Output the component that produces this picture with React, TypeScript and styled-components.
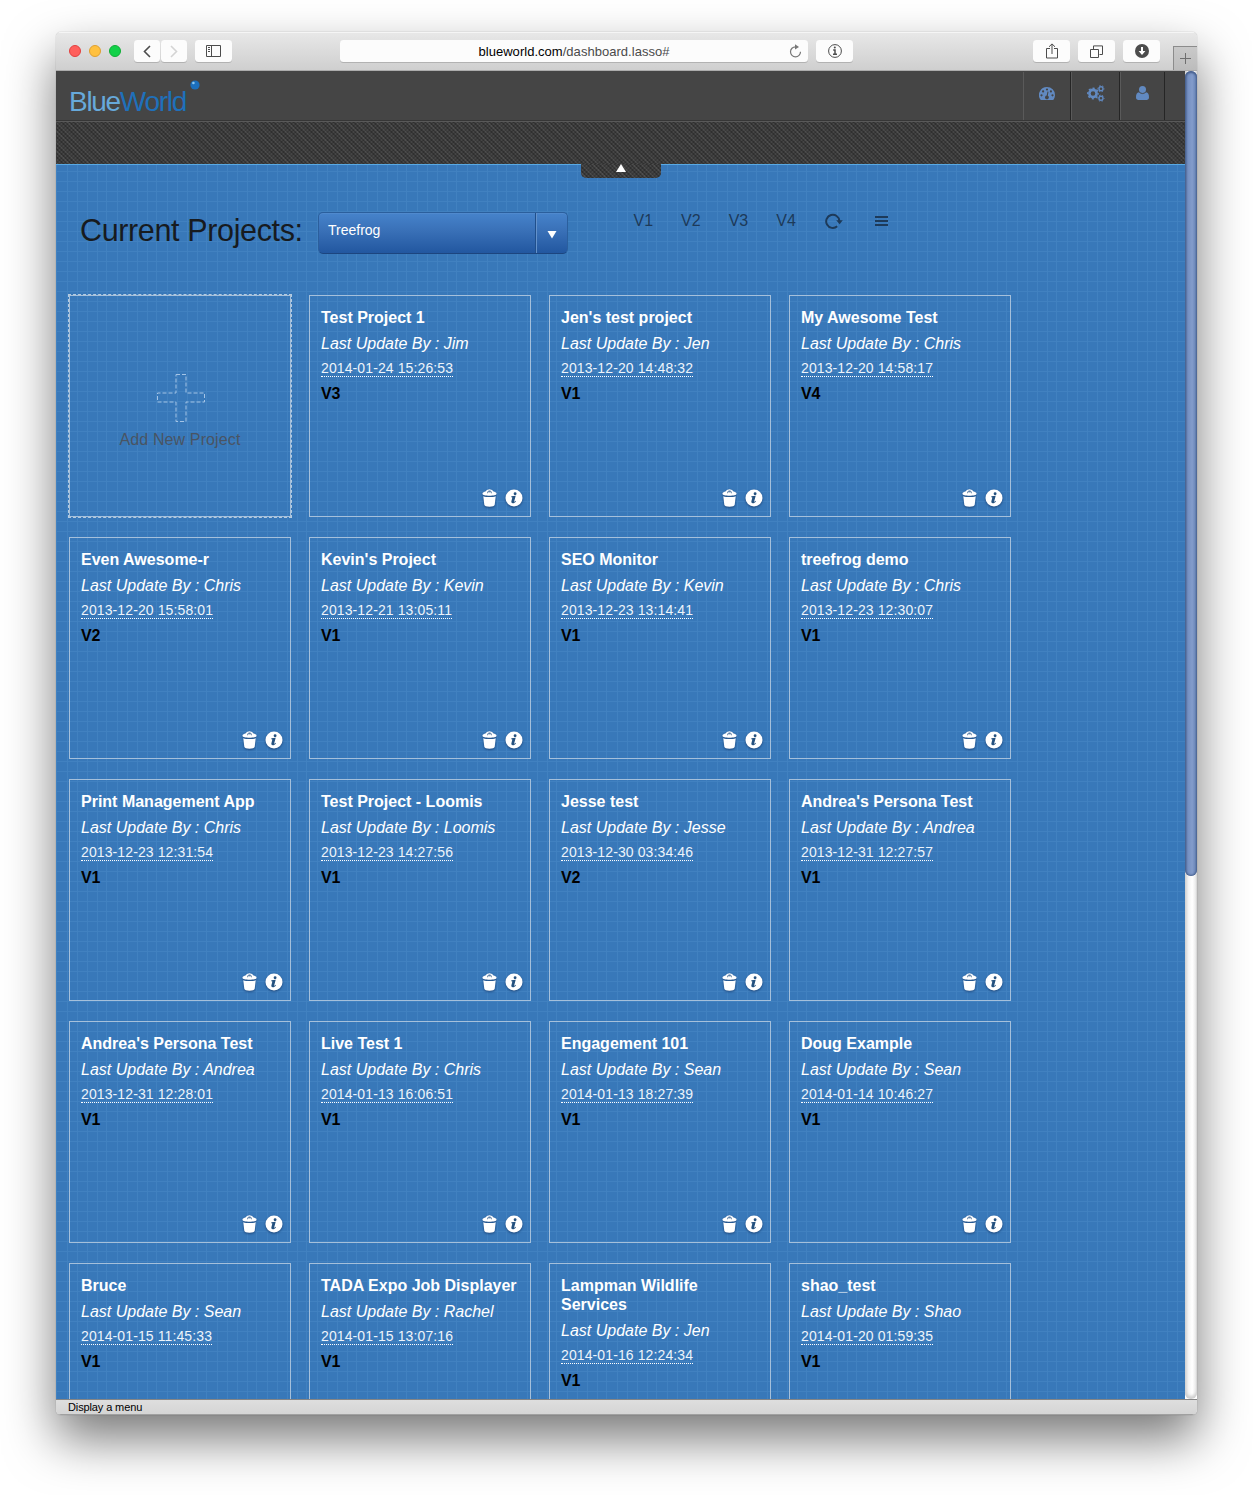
import React from 'react';
import styled, { createGlobalStyle } from 'styled-components';

const GlobalStyle = createGlobalStyle`
  * { box-sizing: border-box; }
  html, body { margin: 0; padding: 0; background: #fff; }
  body { font-family: "Liberation Sans", Arial, sans-serif; overflow: hidden; }
`;

const Desktop = styled.div`
  width: 1253px;
  height: 1495px;
  padding: 32px 56px 0;
  overflow: hidden;
  background: #fff;
`;

const Window = styled.div`
  width: 1141px;
  height: 1383px;
  display: flex;
  flex-direction: column;
  border-radius: 5px;
  overflow: hidden;
`;

const Shadow = styled.div`
  width: 1141px;
  border-radius: 5px;
  box-shadow: 0 0 1px rgba(0, 0, 0, 0.45), 0 24px 50px rgba(0, 0, 0, 0.53);
`;

const Chrome = styled.header`
  flex: none;
  height: 39px;
  display: flex;
  align-items: flex-start;
  padding: 8px 0 0 13px;
  background: linear-gradient(#e8e8e8, #cfcfcf);
  border-bottom: 1px solid #acacac;
  box-shadow: inset 0 1px 0 #f5f5f5;
`;

const Lights = styled.div`
  display: flex;
  gap: 8px;
  padding-top: 5px;
  width: 65px;
`;

const Light = styled.i<{ $fill: string; $edge: string }>`
  width: 12px;
  height: 12px;
  border-radius: 50%;
  background: ${p => p.$fill};
  border: 1px solid ${p => p.$edge};
`;

const ChromeButton = styled.div<{ $w: number; $ml?: number }>`
  width: ${p => p.$w}px;
  height: 22px;
  margin-left: ${p => p.$ml ?? 0}px;
  display: flex;
  align-items: center;
  justify-content: center;
  border-radius: 3.5px;
  background: #fcfcfc;
  box-shadow: 0 1px 0 rgba(0, 0, 0, 0.16);
`;

const AddressBar = styled(ChromeButton)`
  font-size: 13px;
  letter-spacing: 0.03px;
  color: #4a4a4a;
  b { font-weight: 400; color: #000; }
  span { flex: 1; text-align: center; padding-left: 19px; }
  svg { margin-right: 6px; }
`;

const NewTab = styled.div`
  width: 24px;
  height: 24px;
  margin: 6px 0 0 13px;
  border: 1px solid #8c8c8c;
  border-width: 1px 0 0 1px;
  background: linear-gradient(#c9c9c9, #bcbcbc);
  display: flex;
  align-items: center;
  justify-content: center;
`;

const Viewport = styled.div`
  flex: none;
  height: 1328px;
  display: flex;
`;

const Page = styled.main`
  width: 1129px;
  display: flex;
  flex-direction: column;
  overflow: hidden;
`;

const ScrollTrack = styled.div`
  width: 12px;
  border-radius: 0 0 6px 6px;
  background: linear-gradient(90deg, #d2d2d2, #f4f4f4 30%, #fff 60%, #ececec 90%, #d5d5d5);
  box-shadow: inset 0 -3px 3px #cfcfcf;
`;

const ScrollThumb = styled.div`
  height: 805px;
  border-radius: 6px;
  background: linear-gradient(90deg, #4b6391, #7590c2 25%, #839ccb 60%, #6d88ba 85%, #536b99);
  box-shadow: inset 0 2px 2px #465f8d, inset 0 -1px 2px #465f8d;
`;

const TopBar = styled.div`
  flex: none;
  height: 51px;
  display: flex;
  justify-content: space-between;
  background: #454545;
  border-bottom: 1px solid #595959;
  box-shadow: inset 0 -1px 0 #363636;
`;

const Logo = styled.div`
  display: flex;
  padding: 13px 0 0 13px;
  font-size: 28px;
  line-height: 36px;
  letter-spacing: -1.3px;
  color: #1f70ba;
  b { font-weight: 400; color: #67a9da; }
  svg { margin: -4px 0 0 4px; }
`;

const NavIcons = styled.nav`
  display: flex;
  height: 49px;
  padding: 1px 20px 0 0;
`;

const NavCell = styled.a<{ $w: number; $top: number }>`
  width: ${p => p.$w}px;
  height: 48px;
  display: flex;
  justify-content: center;
  align-items: flex-start;
  padding-top: ${p => p.$top}px;
  color: #6189c0;
  border-left: 1px solid #5a5a5a;
  border-right: 1px solid #252525;
`;

const texture = `
  background-color: #3b3b3b;
  background-image:
    linear-gradient(45deg, rgba(0,0,0,.2) 25%, transparent 25% 50%, rgba(0,0,0,.2) 50% 75%, transparent 75%),
    linear-gradient(-45deg, rgba(255,255,255,.05) 25%, transparent 25% 50%, rgba(255,255,255,.05) 50% 75%, transparent 75%),
    linear-gradient(45deg, rgba(255,255,255,.05) 15%, transparent 15% 50%, rgba(255,255,255,.05) 50% 65%, transparent 65%);
  background-size: 4px 4px, 4px 4px, 10px 10px;
`;

const TextureBar = styled.div`
  flex: none;
  position: relative;
  height: 42px;
  ${texture}
`;

const Handle = styled.div`
  position: absolute;
  left: 525px;
  top: 42px;
  width: 80px;
  height: 14px;
  border-radius: 0 0 5px 5px;
  display: flex;
  justify-content: center;
  ${texture}
`;

const Blueprint = styled.div`
  flex: none;
  height: 1235px;
  border-top: 1px solid #58a9e4;
  padding: 47px 13px 0;
  background-color: #3878b9;
  background-image:
    linear-gradient(90deg, #4181c0 0 1px, transparent 1px 11px, #4181c0 11px 12px, transparent 12px 21px, #4181c0 21px 22px, transparent 22px 31px, #4181c0 31px 32px, transparent 32px 41px, #4181c0 41px 42px, transparent 42px),
    linear-gradient(#4181c0 1px, transparent 1px);
  background-size: 50px 10px, 10px 10px;
  background-position: 0 0, 0 6px;
  overflow: hidden;
`;

const Heading = styled.div`
  display: flex;
  align-items: flex-start;
  height: 83px;
  padding-left: 11px;
`;

const Title = styled.h1`
  margin: -1px 0 0;
  width: 238px;
  font-size: 30.5px;
  line-height: 38px;
  font-weight: 400;
  letter-spacing: -0.36px;
  white-space: nowrap;
  color: #171b1f;
`;

const Select = styled.div`
  width: 250px;
  height: 42px;
  display: flex;
  border: 1px solid #2b5f9d;
  border-bottom-color: #1c457f;
  border-radius: 5px;
  background: linear-gradient(#4683cb, #3970b7 45%, #2257a0);
  color: #fff;
  font-size: 14px;
  box-shadow: inset 0 1px 0 rgba(255, 255, 255, 0.06);
`;

const SelectValue = styled.div`
  width: 217px;
  padding: 8px 9px;
  line-height: 19px;
  border-right: 1px solid #204f8b;
`;

const SelectArrow = styled.div`
  flex: 1;
  display: flex;
  justify-content: center;
  padding-top: 17px;
  border-left: 1px solid #6492cb;
`;

const Versions = styled.div`
  display: flex;
  margin-left: 51.5px;
  color: #1d3a59;
  font-size: 16px;
  line-height: 18px;
`;

const Version = styled.a`
  width: 47.6px;
  height: 18px;
  display: flex;
  justify-content: center;
  align-items: center;
`;

const Grid = styled.div`
  display: grid;
  grid-template-columns: repeat(4, 222px);
  grid-auto-rows: 222px;
  gap: 20px 18px;
`;

const Card = styled.article`
  border: 1px solid #a5c0db;
  padding: 12px 11px 9px;
  display: flex;
  flex-direction: column;
  align-items: flex-start;
  color: #fff;
`;

const CardTitle = styled.h2`
  margin: 0;
  width: 198px;
  font-size: 16px;
  line-height: 19px;
`;

const CardAuthor = styled.em`
  margin-top: 7px;
  font-size: 16px;
  line-height: 19px;
`;

const CardDate = styled.time`
  margin-top: 7px;
  font-size: 14px;
  line-height: 16px;
  height: 17px;
  letter-spacing: 0.11px;
  color: #edf4fb;
  border-bottom: 1px dotted #fff;
`;

const CardVersion = styled.strong`
  margin-top: 7px;
  font-size: 16px;
  line-height: 19px;
  letter-spacing: -0.3px;
  color: #000;
`;

const CardActions = styled.div`
  display: flex;
  gap: 8px;
  align-self: flex-end;
  margin: auto -4px 0 0;
  svg { filter: drop-shadow(0 1px 1px rgba(0, 20, 60, 0.5)); }
`;

const AddCard = styled.div`
  border: 1px solid #a5c0db;
  outline: 1px dashed #b4cbe0;
  display: flex;
  flex-direction: column;
  align-items: center;
  padding-top: 78px;
  color: #495463;
  font-size: 16px;
  line-height: 19px;
  letter-spacing: 0.12px;
  svg { margin: 0 0 8px 2px; }
`;

const StatusBar = styled.footer`
  flex: none;
  height: 16px;
  padding-left: 12px;
  border-top: 1px solid #858585;
  background: linear-gradient(#dedede, #d4d4d4);
  box-shadow: inset 0 -1px 0 #a0a0a0;
  font-size: 11px;
  line-height: 14px;
  letter-spacing: -0.12px;
  color: #000;
`;

type Project = [name: string, by: string, date: string, version: number];

const projects: Project[] = [
  ['Test Project 1', 'Jim', '2014-01-24 15:26:53', 3],
  ["Jen's test project", 'Jen', '2013-12-20 14:48:32', 1],
  ['My Awesome Test', 'Chris', '2013-12-20 14:58:17', 4],
  ['Even Awesome-r', 'Chris', '2013-12-20 15:58:01', 2],
  ["Kevin's Project", 'Kevin', '2013-12-21 13:05:11', 1],
  ['SEO Monitor', 'Kevin', '2013-12-23 13:14:41', 1],
  ['treefrog demo', 'Chris', '2013-12-23 12:30:07', 1],
  ['Print Management App', 'Chris', '2013-12-23 12:31:54', 1],
  ['Test Project - Loomis', 'Loomis', '2013-12-23 14:27:56', 1],
  ['Jesse test', 'Jesse', '2013-12-30 03:34:46', 2],
  ["Andrea's Persona Test", 'Andrea', '2013-12-31 12:27:57', 1],
  ["Andrea's Persona Test", 'Andrea', '2013-12-31 12:28:01', 1],
  ['Live Test 1', 'Chris', '2014-01-13 16:06:51', 1],
  ['Engagement 101', 'Sean', '2014-01-13 18:27:39', 1],
  ['Doug Example', 'Sean', '2014-01-14 10:46:27', 1],
  ['Bruce', 'Sean', '2014-01-15 11:45:33', 1],
  ['TADA Expo Job Displayer', 'Rachel', '2014-01-15 13:07:16', 1],
  ['Lampman Wildlife Services', 'Jen', '2014-01-16 12:24:34', 1],
  ['shao_test', 'Shao', '2014-01-20 01:59:35', 1],
];

const Chevron = ({ flip, color }: { flip?: boolean; color: string }) => (
  <svg width="8" height="13" viewBox="0 0 8 13" fill="none" stroke={color} strokeWidth="1.6">
    <path d={flip ? 'M1 1l5.5 5.5L1 12' : 'M7 1L1.5 6.5 7 12'} />
  </svg>
);

const SidebarIcon = () => (
  <svg width="15" height="12" viewBox="0 0 15 12" fill="none" stroke="#4c4c4c">
    <path d="M.5.5h14v11H.5zM5.5.5v11M2 2.5h2M2 4.5h2M2 6.5h2" />
  </svg>
);

const ReloadIcon = () => (
  <svg width="13" height="14" viewBox="0 0 13 14" fill="none" stroke="#777" strokeWidth="1.2">
    <path d="M7.2 2.8H6.5a5 5 0 1 0 5 5" />
    <path d="M6 .2L10 2.9 6 5.6z" fill="#777" stroke="none" />
  </svg>
);

const PageInfoIcon = () => (
  <svg width="14" height="14" viewBox="0 0 14 14" fill="none" stroke="#4c4c4c">
    <circle cx="7" cy="7" r="6.4" />
    <path d="M5.2 6H7v4.3M5 10.3h4" strokeWidth="1.5" />
    <circle cx="6.8" cy="3.6" r="1" fill="#4c4c4c" stroke="none" />
  </svg>
);

const ShareIcon = () => (
  <svg width="12" height="16" viewBox="0 0 12 16" fill="none" stroke="#4c4c4c">
    <path d="M4 5.5H.5v9.5h11V5.5H8M6 11V1M3 3.8L6 .9l3 2.9" />
  </svg>
);

const TabsIcon = () => (
  <svg width="13" height="13" viewBox="0 0 13 13" fill="none" stroke="#4c4c4c">
    <path d="M.5 4.5h8v8h-8zM3.5 4V.9h9v8.6H9.5" />
  </svg>
);

const DownloadIcon = () => (
  <svg width="14" height="14" viewBox="0 0 14 14">
    <circle cx="7" cy="7" r="7" fill="#4c4c4c" />
    <path d="M6 3h2v4h2.4L7 11 3.6 7H6z" fill="#fff" />
  </svg>
);

const GaugeIcon = () => (
  <svg width="16" height="13" viewBox="0 0 16 13">
    <path d="M8 0a8 8 0 0 1 8 8c0 1.6-.4 3-1.2 4.3-.2.4-.4.7-.9.7H2.1c-.5 0-.7-.3-.9-.7A8 8 0 0 1 8 0z" fill="currentColor" />
    <g fill="#454545">
      <circle cx="2.5" cy="8.3" r="1.1" />
      <circle cx="4.1" cy="4.4" r="1.1" />
      <circle cx="8" cy="2.5" r="1.1" />
      <circle cx="11.9" cy="4.4" r="1.1" />
      <circle cx="13.5" cy="8.3" r="1.1" />
      <path d="M8.500 4.600l1 .2-.7 3.900a1.900 1.900 0 1 1-1.100-.2z" />
    </g>
  </svg>
);

const CogsIcon = () => (
  <svg width="18" height="17" viewBox="0 0 18 17" fill="none" stroke="currentColor">
    <circle cx="6" cy="8.500" r="3.600" strokeWidth="2.600" />
    <circle cx="6" cy="8.500" r="5.200" strokeWidth="1.500" strokeDasharray="2.080 2.004" strokeDashoffset="1.040" />
    <circle cx="14" cy="3.700" r="2" strokeWidth="1.400" />
    <circle cx="14" cy="3.700" r="3.100" strokeWidth="1" strokeDasharray="1.450 1.796" strokeDashoffset=".7" />
    <circle cx="14" cy="13.200" r="2" strokeWidth="1.400" />
    <circle cx="14" cy="13.200" r="3.100" strokeWidth="1" strokeDasharray="1.450 1.796" strokeDashoffset=".7" />
  </svg>
);

const UserIcon = () => (
  <svg width="13" height="14" viewBox="0 0 13 14" fill="currentColor">
    <circle cx="6.5" cy="3.5" r="3.5" />
    <path d="M3 6.2c1 .9 2.2 1.300 3.500 1.300S9 7.100 10 6.200c2.200.1 3 2.200 3 5 0 1.700-.9 2.800-2.500 2.800h-8C.9 14 0 12.900 0 11.200c0-2.800.8-4.900 3-5z" />
    <path d="M3.200 6.300c1 .9 2.100 1.300 3.300 1.300s2.300-.4 3.300-1.300" fill="none" stroke="#454545" strokeWidth=".5" />
  </svg>
);

const RotateIcon = () => (
  <svg width="18" height="16" viewBox="0 0 18 16" fill="none" stroke="#1d3a59" strokeWidth="2">
    <path d="M12.2 13.300A6.600 6.600 0 1 1 14.400 8" />
    <path d="M11.200 7.300h6.600l-3.200 4z" fill="#1d3a59" stroke="none" />
  </svg>
);

const ListIcon = () => (
  <svg width="13" height="10" viewBox="0 0 13 10" stroke="#1d3a59" strokeWidth="1.8">
    <path d="M0 1h13M0 5h13M0 9h13" />
  </svg>
);

const TrashIcon = () => (
  <svg width="15" height="18" viewBox="0 0 15 18">
    <path d="M4 3C5 .2 10 .2 11 3" fill="none" stroke="#fff" strokeWidth="1.3" />
    <path d="M.5 4.500C.5 3.200 3.500 2.300 7.500 2.300s7 .9 7 2.200v.5c0 1-3 1.700-7 1.700s-7-.7-7-1.700z" fill="#fff" />
    <path d="M5.200 4l1.300-1.200h2L9.800 4" fill="none" stroke="#24517f" strokeWidth=".9" />
    <path d="M1.300 7.300c1.600.6 3.800.8 6.200.8s4.600-.2 6.200-.8l-1 8.500c-.1 1.300-2.300 2-5.200 2s-5.100-.7-5.200-2z" fill="#fff" />
  </svg>
);

const InfoIcon = () => (
  <svg width="18" height="18" viewBox="0 0 18 18">
    <circle cx="9" cy="9" r="8.5" fill="#fff" />
    <g fill="#24517f">
      <circle cx="10.1" cy="4.7" r="1.45" />
      <path d="M6.400 7.200l4.300-.4-1.500 5.500c-.1.500.3.500.6.200l.8-.7.4.4c-1 1.400-2 2-3.200 2-1.300 0-1.700-.8-1.400-1.900l.9-3.500c.1-.4 0-.6-.4-.6h-.7z" />
    </g>
  </svg>
);

const PlusOutline = () => (
  <svg width="48" height="48" viewBox="0 0 48 48" fill="none" stroke="#a4c4e6" strokeDasharray="4 2">
    <path d="M19 .5h10v18.500h18.500v9H29v19.500H19V28H.5v-9H19z" />
  </svg>
);

export default function App() {
  return (
    <Desktop>
      <GlobalStyle />
      <Shadow>
        <Window>
          <Chrome>
            <Lights>
              <Light $fill="#ff5f5c" $edge="#e2403f" />
              <Light $fill="#ffc140" $edge="#dfa030" />
              <Light $fill="#12d149" $edge="#0fae36" />
            </Lights>
            <ChromeButton $w={26}><Chevron color="#4c4c4c" /></ChromeButton>
            <ChromeButton $w={26} $ml={1}><Chevron flip color="#d4d4d4" /></ChromeButton>
            <ChromeButton $w={37} $ml={8}><SidebarIcon /></ChromeButton>
            <AddressBar $w={468} $ml={108}>
              <span><b>blueworld.com</b>/dashboard.lasso#</span>
              <ReloadIcon />
            </AddressBar>
            <ChromeButton $w={37} $ml={8}><PageInfoIcon /></ChromeButton>
            <ChromeButton $w={37} $ml={180}><ShareIcon /></ChromeButton>
            <ChromeButton $w={37} $ml={8}><TabsIcon /></ChromeButton>
            <ChromeButton $w={37} $ml={8}><DownloadIcon /></ChromeButton>
            <NewTab>
              <svg width="11" height="11" stroke="#6e6e6e"><path d="M5.5 0v11M0 5.5h11" /></svg>
            </NewTab>
          </Chrome>
          <Viewport>
            <Page>
              <TopBar>
                <Logo>
                  <b>Blue</b>World
                  <svg width="10" height="10" viewBox="0 0 10 10">
                    <circle cx="5" cy="5" r="4.6" fill="#1b6fbd" />
                    <circle cx="3.4" cy="3" r="1.3" fill="#8cc6ef" />
                  </svg>
                </Logo>
                <NavIcons>
                  <NavCell $w={48} $top={15}><GaugeIcon /></NavCell>
                  <NavCell $w={49} $top={13}><CogsIcon /></NavCell>
                  <NavCell $w={45} $top={14}><UserIcon /></NavCell>
                </NavIcons>
              </TopBar>
              <TextureBar>
                <Handle>
                  <svg width="10" height="9"><path d="M5 0l5 8H0z" fill="#fff" /></svg>
                </Handle>
              </TextureBar>
              <Blueprint>
                <Heading>
                  <Title>Current Projects:</Title>
                  <Select>
                    <SelectValue>Treefrog</SelectValue>
                    <SelectArrow>
                      <svg width="10" height="9"><path d="M.5 1h9L5 8.5z" fill="#fff" /></svg>
                    </SelectArrow>
                  </Select>
                  <Versions>
                    {['V1', 'V2', 'V3', 'V4'].map(v => <Version key={v}>{v}</Version>)}
                    <Version><RotateIcon /></Version>
                    <Version><ListIcon /></Version>
                  </Versions>
                </Heading>
                <Grid>
                  <AddCard><PlusOutline />Add New Project</AddCard>
                  {projects.map(([name, by, date, version], i) => (
                    <Card key={i}>
                      <CardTitle>{name}</CardTitle>
                      <CardAuthor>Last Update By : {by}</CardAuthor>
                      <CardDate>{date}</CardDate>
                      <CardVersion>V{version}</CardVersion>
                      <CardActions><TrashIcon /><InfoIcon /></CardActions>
                    </Card>
                  ))}
                </Grid>
              </Blueprint>
            </Page>
            <ScrollTrack><ScrollThumb /></ScrollTrack>
          </Viewport>
          <StatusBar>Display a menu</StatusBar>
        </Window>
      </Shadow>
    </Desktop>
  );
}
